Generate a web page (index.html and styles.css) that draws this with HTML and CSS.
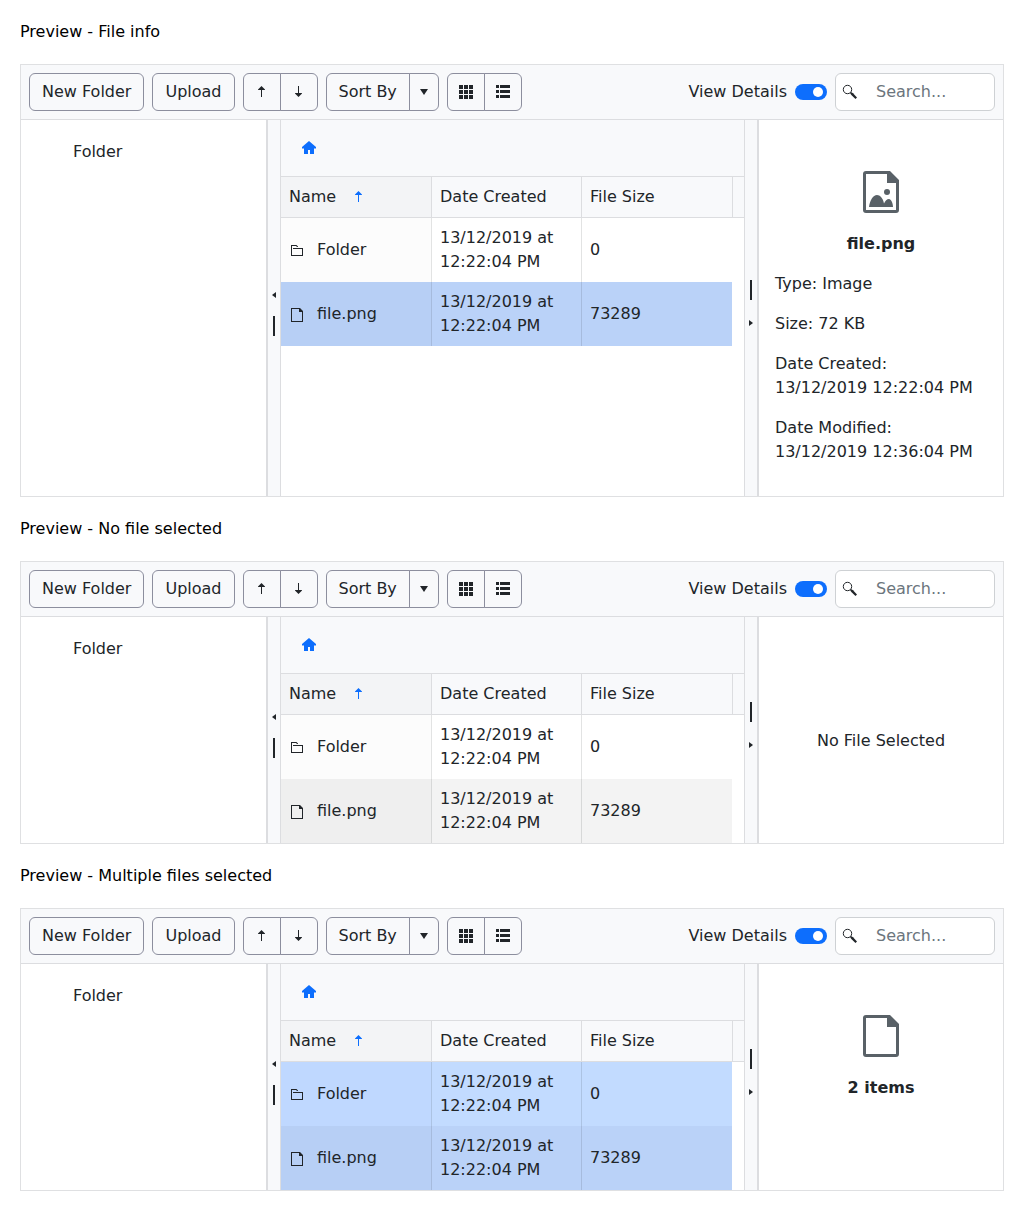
FILE: index.html
```html
<!DOCTYPE html>
<html lang="en">
<head>
<meta charset="utf-8">
<meta name="viewport" content="width=device-width, initial-scale=1">
<title>File manager preview</title>
<link rel="stylesheet" href="styles.css">
</head>
<body>
<svg class="sprite" aria-hidden="true">
  <symbol id="arrow-up" viewBox="0 0 16 16"><path d="M7 13V6H4v-.6L7.5 2 11 5.400V6H8v7z"/></symbol>
  <symbol id="arrow-down" viewBox="0 0 16 16"><path d="M7 2v7H4v.6L7.500 13 11 9.600V9H8V2z"/></symbol>
  <symbol id="caret-down" viewBox="0 0 16 16"><path d="M4 5h8l-4 6z"/></symbol>
  <symbol id="caret-left" viewBox="0 0 12 16"><path d="M4 7l4-3v6z"/></symbol>
  <symbol id="caret-right" viewBox="0 0 12 16"><path d="M8 7L4 4v6z"/></symbol>
  <symbol id="grid" viewBox="0 0 16 16"><path d="M1 1h4v4H1zM6 1h4v4H6zM11 1h4v4h-4zM1 6h4v4H1zM6 6h4v4H6zM11 6h4v4h-4zM1 11h4v4H1zM6 11h4v4H6zM11 11h4v4h-4z"/></symbol>
  <symbol id="list" viewBox="0 0 16 16"><path d="M1 1h3v3H1zM5 1h10v3H5zM1 6h3v3H1zM5 6h10v3H5zM1 11h3v3H1zM5 11h10v3H5z"/></symbol>
  <symbol id="search" viewBox="0 0 16 16"><circle cx="5.500" cy="5.500" r="4.200" fill="none" stroke="currentColor"/><path d="M8 9l1-1 2 1.300 4 4.200-1.500 1.500-4.200-4z"/></symbol>
  <symbol id="home" viewBox="0 0 16 16"><path d="M8 1l7 6v1.500h-2V14H9v-4H7v4H3V8.500H1V7z"/></symbol>
  <symbol id="folder" viewBox="0 0 16 16"><path d="M2 3h5.500L9 4.500V5H8L7 4H3v9h10V7H4V6h10v8H2z"/></symbol>
  <symbol id="file" viewBox="0 0 16 16"><path fill-rule="evenodd" d="M2 2h9l3 3v11H2zM3 3v12h10V6h-3V3z"/></symbol>
  <symbol id="file-large" viewBox="0 0 48 48"><path fill-rule="evenodd" d="M9 3h24l9 9v30a3 3 0 0 1-3 3H9a3 3 0 0 1-3-3V6a3 3 0 0 1 3-3zM9 6v36h30V15h-9V6z"/></symbol>
  <symbol id="image-large" viewBox="0 0 48 48"><path fill-rule="evenodd" d="M9 3h24l9 9v30a3 3 0 0 1-3 3H9a3 3 0 0 1-3-3V6a3 3 0 0 1 3-3zM9 6v36h30V15h-9V6z"/><circle cx="30" cy="24" r="3"/><path d="M12 39c1-7 4-12 8-12 3 0 6 3 7 8.500 1-2.500 3-4.500 5-4.500s4 4 4 8z"/></symbol>
</svg>

<section class="example">
  <h2 class="title">Preview - File info</h2>
  <div class="manager">
    <div class="toolbar">
      <button class="btn" type="button">New Folder</button>
      <button class="btn" type="button">Upload</button>
      <div class="group">
        <button class="btn square" type="button" aria-label="Sort ascending"><svg class="icon"><use href="#arrow-up"/></svg></button>
        <button class="btn square" type="button" aria-label="Sort descending"><svg class="icon"><use href="#arrow-down"/></svg></button>
      </div>
      <div class="group">
        <button class="btn" type="button">Sort By</button>
        <button class="btn narrow" type="button" aria-label="Sort options"><svg class="icon"><use href="#caret-down"/></svg></button>
      </div>
      <div class="group">
        <button class="btn square" type="button" aria-label="Grid view"><svg class="icon"><use href="#grid"/></svg></button>
        <button class="btn square" type="button" aria-label="List view"><svg class="icon"><use href="#list"/></svg></button>
      </div>
      <label class="details">View Details <input class="switch" type="checkbox" role="switch" checked></label>
      <label class="search"><svg class="icon"><use href="#search"/></svg><input type="search" placeholder="Search..." aria-label="Search"></label>
    </div>
    <div class="content">
      <nav class="tree"><a href="#">Folder</a></nav>
      <div class="splitter before"><svg class="collapse"><use href="#caret-left"/></svg><span class="handle"></span></div>
      <div class="files">
        <nav class="breadcrumb"><a href="#" aria-label="Home"><svg class="icon"><use href="#home"/></svg></a></nav>
        <table class="grid">
          <colgroup><col class="column"><col class="column"><col><col class="gutter"></colgroup>
          <thead><tr><th><span class="sorted">Name <svg class="icon"><use href="#arrow-up"/></svg></span></th><th>Date Created</th><th>File Size</th><th></th></tr></thead>
          <tbody>
            <tr><td><span class="entry"><svg class="icon"><use href="#folder"/></svg>Folder</span></td><td>13/12/2019 at 12:22:04 PM</td><td>0</td></tr>
            <tr class="alt selected"><td><span class="entry"><svg class="icon"><use href="#file"/></svg>file.png</span></td><td>13/12/2019 at 12:22:04 PM</td><td>73289</td></tr>
          </tbody>
        </table>
      </div>
      <div class="splitter after"><span class="handle"></span><svg class="collapse"><use href="#caret-right"/></svg></div>
      <aside class="preview">
        <svg class="thumb"><use href="#image-large"/></svg>
        <strong class="name">file.png</strong>
        <dl class="info">
          <div><dt>Type:</dt> <dd>Image</dd></div>
          <div><dt>Size:</dt> <dd>72 KB</dd></div>
          <div class="stacked"><dt>Date Created:</dt><dd>13/12/2019 12:22:04 PM</dd></div>
          <div class="stacked"><dt>Date Modified:</dt><dd>13/12/2019 12:36:04 PM</dd></div>
        </dl>
      </aside>
    </div>
  </div>
</section>

<section class="example">
  <h2 class="title">Preview - No file selected</h2>
  <div class="manager">
    <div class="toolbar">
      <button class="btn" type="button">New Folder</button>
      <button class="btn" type="button">Upload</button>
      <div class="group">
        <button class="btn square" type="button" aria-label="Sort ascending"><svg class="icon"><use href="#arrow-up"/></svg></button>
        <button class="btn square" type="button" aria-label="Sort descending"><svg class="icon"><use href="#arrow-down"/></svg></button>
      </div>
      <div class="group">
        <button class="btn" type="button">Sort By</button>
        <button class="btn narrow" type="button" aria-label="Sort options"><svg class="icon"><use href="#caret-down"/></svg></button>
      </div>
      <div class="group">
        <button class="btn square" type="button" aria-label="Grid view"><svg class="icon"><use href="#grid"/></svg></button>
        <button class="btn square" type="button" aria-label="List view"><svg class="icon"><use href="#list"/></svg></button>
      </div>
      <label class="details">View Details <input class="switch" type="checkbox" role="switch" checked></label>
      <label class="search"><svg class="icon"><use href="#search"/></svg><input type="search" placeholder="Search..." aria-label="Search"></label>
    </div>
    <div class="content">
      <nav class="tree"><a href="#">Folder</a></nav>
      <div class="splitter before"><svg class="collapse"><use href="#caret-left"/></svg><span class="handle"></span></div>
      <div class="files">
        <nav class="breadcrumb"><a href="#" aria-label="Home"><svg class="icon"><use href="#home"/></svg></a></nav>
        <table class="grid">
          <colgroup><col class="column"><col class="column"><col><col class="gutter"></colgroup>
          <thead><tr><th><span class="sorted">Name <svg class="icon"><use href="#arrow-up"/></svg></span></th><th>Date Created</th><th>File Size</th><th></th></tr></thead>
          <tbody>
            <tr><td><span class="entry"><svg class="icon"><use href="#folder"/></svg>Folder</span></td><td>13/12/2019 at 12:22:04 PM</td><td>0</td></tr>
            <tr class="alt"><td><span class="entry"><svg class="icon"><use href="#file"/></svg>file.png</span></td><td>13/12/2019 at 12:22:04 PM</td><td>73289</td></tr>
          </tbody>
        </table>
      </div>
      <div class="splitter after"><span class="handle"></span><svg class="collapse"><use href="#caret-right"/></svg></div>
      <aside class="preview empty">No File Selected</aside>
    </div>
  </div>
</section>

<section class="example">
  <h2 class="title">Preview - Multiple files selected</h2>
  <div class="manager">
    <div class="toolbar">
      <button class="btn" type="button">New Folder</button>
      <button class="btn" type="button">Upload</button>
      <div class="group">
        <button class="btn square" type="button" aria-label="Sort ascending"><svg class="icon"><use href="#arrow-up"/></svg></button>
        <button class="btn square" type="button" aria-label="Sort descending"><svg class="icon"><use href="#arrow-down"/></svg></button>
      </div>
      <div class="group">
        <button class="btn" type="button">Sort By</button>
        <button class="btn narrow" type="button" aria-label="Sort options"><svg class="icon"><use href="#caret-down"/></svg></button>
      </div>
      <div class="group">
        <button class="btn square" type="button" aria-label="Grid view"><svg class="icon"><use href="#grid"/></svg></button>
        <button class="btn square" type="button" aria-label="List view"><svg class="icon"><use href="#list"/></svg></button>
      </div>
      <label class="details">View Details <input class="switch" type="checkbox" role="switch" checked></label>
      <label class="search"><svg class="icon"><use href="#search"/></svg><input type="search" placeholder="Search..." aria-label="Search"></label>
    </div>
    <div class="content">
      <nav class="tree"><a href="#">Folder</a></nav>
      <div class="splitter before"><svg class="collapse"><use href="#caret-left"/></svg><span class="handle"></span></div>
      <div class="files">
        <nav class="breadcrumb"><a href="#" aria-label="Home"><svg class="icon"><use href="#home"/></svg></a></nav>
        <table class="grid">
          <colgroup><col class="column"><col class="column"><col><col class="gutter"></colgroup>
          <thead><tr><th><span class="sorted">Name <svg class="icon"><use href="#arrow-up"/></svg></span></th><th>Date Created</th><th>File Size</th><th></th></tr></thead>
          <tbody>
            <tr class="selected"><td><span class="entry"><svg class="icon"><use href="#folder"/></svg>Folder</span></td><td>13/12/2019 at 12:22:04 PM</td><td>0</td></tr>
            <tr class="alt selected"><td><span class="entry"><svg class="icon"><use href="#file"/></svg>file.png</span></td><td>13/12/2019 at 12:22:04 PM</td><td>73289</td></tr>
          </tbody>
        </table>
      </div>
      <div class="splitter after"><span class="handle"></span><svg class="collapse"><use href="#caret-right"/></svg></div>
      <aside class="preview">
        <svg class="thumb"><use href="#file-large"/></svg>
        <strong class="name">2 items</strong>
      </aside>
    </div>
  </div>
</section>
</body>
</html>
```
FILE: styles.css
```css
* { box-sizing: border-box; }

body {
  margin: 0;
  padding: 20px;
  display: flex;
  flex-direction: column;
  gap: 20px;
  background: #fff;
  color: #000;
  font: 16px/24px "DejaVu Sans", sans-serif;
}

.sprite { display: none; }
.icon { width: 16px; height: 16px; flex: none; display: block; fill: currentColor; }
a { color: inherit; text-decoration: none; }

.example { display: flex; flex-direction: column; gap: 20px; }
.title { margin: 0; font-size: 16px; font-weight: 400; }
.manager { border: 1px solid #dfe0e2; color: #212529; }

/* Toolbar */
.toolbar {
  display: flex;
  align-items: center;
  gap: 8px;
  padding: 8px;
  background: #f8f9fb;
  border-bottom: 1px solid #dcdde0;
}
.btn {
  height: 38px;
  padding: 6px 12px;
  border: 1px solid #8c8e9e;
  border-radius: 6px;
  background: transparent;
  color: inherit;
  font: inherit;
  white-space: nowrap;
}
.btn.square { padding: 6px 10px; }
.btn.narrow { padding: 6px; }
.group { display: flex; }
.group .btn:first-child { border-radius: 6px 0 0 6px; }
.group .btn:last-child { border-radius: 0 6px 6px 0; margin-left: -1px; }

.details { display: flex; align-items: center; gap: 8px; margin-left: auto; white-space: nowrap; }
.switch {
  appearance: none;
  width: 32px;
  height: 16px;
  margin: 0;
  padding: 3px 4px;
  border-radius: 8px;
  background: #0d6efd;
  display: flex;
  justify-content: flex-end;
}
.switch::before { content: ""; width: 10px; height: 10px; border-radius: 50%; background: #fff; }
.switch:not(:checked) { justify-content: flex-start; background: #adb5bd; }

.search {
  display: flex;
  align-items: center;
  width: 160px;
  height: 38px;
  padding: 0 6px;
  border: 1px solid #ced1d4;
  border-radius: 6px;
  background: #fff;
}
.search input {
  flex: 1;
  min-width: 0;
  margin: 0;
  padding: 0 0 0 18px;
  border: 0;
  background: none;
  outline: none;
  color: inherit;
  font: inherit;
}
.search input::placeholder { color: #6c757d; opacity: 1; }

/* Panes */
.content { display: grid; grid-template-columns: 245fr 15px 463fr 15px 244fr; }
.tree { padding: 20px 16px 20px 52px; }
.splitter {
  display: flex;
  flex-direction: column;
  align-items: center;
  justify-content: center;
  border: 0 solid #dcdde0;
  background: #f8f9fb;
}
.splitter.before { border-width: 0 1px 0 2px; gap: 12px; padding-top: 8px; }
.splitter.after { border-width: 0 2px 0 1px; gap: 16px; padding-bottom: 4px; }
.collapse { width: 12px; height: 16px; fill: currentColor; }
.handle { width: 2px; height: 20px; background: #212529; }

.breadcrumb {
  display: flex;
  align-items: center;
  height: 57px;
  padding: 0 20px;
  background: #f8f9fb;
  border-bottom: 1px solid #dcdde0;
  color: #0d6efd;
}

/* File list */
.grid { width: 100%; table-layout: fixed; border-collapse: separate; border-spacing: 0; }
.column { width: 32.4%; }
.gutter { width: 12px; }
.grid th, .grid td { padding: 8px; text-align: left; font-weight: 400; vertical-align: middle; }
.grid th { background: #f8f9fb; border-bottom: 1px solid #dcdde0; white-space: nowrap; }
.grid th + th { border-left: 1px solid #dcdde0; }
.grid th:last-child { padding: 0; }
.grid th:first-child { background: #f3f4f6; }
.grid td + td { border-left: 1px solid rgba(33, 37, 41, .13); }
.grid td:first-child { background: #fcfcfc; }
.alt td { background: #f3f3f3; }
.grid .alt td:first-child { background: #efefef; }
.selected td { background: #c2dbff; }
.grid .selected td:first-child { background: #bfd8ff; }
.alt.selected td { background: #bad2f8; }
.grid .alt.selected td:first-child { background: #b7cff5; }
.sorted { display: flex; align-items: center; gap: 15px; }
.sorted .icon { color: #0d6efd; }
.entry { display: flex; align-items: center; gap: 12px; }

/* Preview pane */
.preview { display: flex; flex-direction: column; align-items: center; gap: 16px; padding: 48px 16px 32px; }
.preview.empty { justify-content: center; padding: 38px 16px 16px; }
.thumb { width: 48px; height: 48px; fill: #596167; }
.name { font-weight: 700; }
.info { align-self: stretch; margin: 0; display: flex; flex-direction: column; gap: 16px; }
.info dt, .info dd { display: inline; margin: 0; }
.info .stacked dt, .info .stacked dd { display: block; }
```
